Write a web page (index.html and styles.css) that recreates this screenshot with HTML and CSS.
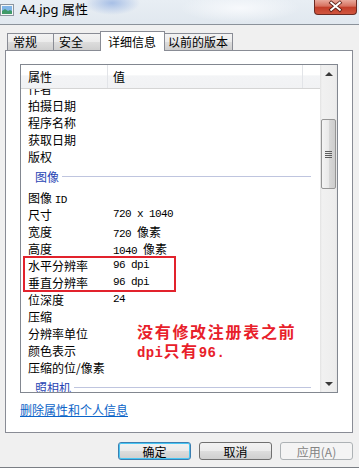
FILE: index.html
```html
<!DOCTYPE html>
<html lang="zh-CN">
<head>
    <meta charset="UTF-8">
    <meta name="viewport" content="width=device-width, initial-scale=1.0">
    <title>A4.jpg 属性</title>
    <link rel="stylesheet" href="styles.css">
</head>
<body>
    <div class="titlebar">
        <svg class="app-icon" width="14" height="12" viewBox="0 0 14 12">
            <rect x="0.5" y="0.5" width="13" height="11" fill="#f4f6f8" stroke="#8d96a0"/>
            <rect x="2" y="2" width="10" height="8" fill="#7fb4e6"/>
            <path d="M2 7 L5 5 L8 7 L10 6 L12 7 L12 10 L2 10 Z" fill="#3f9a6a"/>
        </svg>
        <span class="title">A4.jpg 属性</span>
        <div class="close-btn">
            <svg width="43" height="15" viewBox="0 0 43 15">
                <path d="M17 3.5 L26 11 M26 3.5 L17 11" stroke="#5a1f16" stroke-width="3.8" stroke-linecap="square"/>
                <path d="M17 3.5 L26 11 M26 3.5 L17 11" stroke="#ffffff" stroke-width="2" stroke-linecap="square"/>
            </svg>
        </div>
    </div>

    <div class="tabs">
        <div class="tab tab-first">常规</div>
        <div class="tab">安全</div>
        <div class="tab active">详细信息</div>
        <div class="tab tab-last">以前的版本</div>
    </div>

    <div class="panel">
        <div class="listview">
            <div class="lv-main">
                <div class="lv-header">
                    <div class="hcol hcol-name">属性</div>
                    <div class="hcol hcol-value">值</div>
                    <div class="hcol hcol-rest"></div>
                </div>
                <div class="lv-body">
                    <div class="lv-rows">
                        <div class="row"><span>作者</span><span></span></div>
                        <div class="row"><span>拍摄日期</span><span></span></div>
                        <div class="row"><span>程序名称</span><span></span></div>
                        <div class="row"><span>获取日期</span><span></span></div>
                        <div class="row"><span>版权</span><span></span></div>
                        <div class="group"><span class="group-label">图像</span><span class="group-line"></span></div>
                        <div class="row"><span>图像 <span class="mono">ID</span></span><span></span></div>
                        <div class="row"><span>尺寸</span><span class="mono">720 x 1040</span></div>
                        <div class="row"><span>宽度</span><span><span class="mono">720 </span>像素</span></div>
                        <div class="row"><span>高度</span><span><span class="mono">1040 </span>像素</span></div>
                        <div class="mark">
                            <div class="row"><span>水平分辨率</span><span class="mono">96 dpi</span></div>
                            <div class="row"><span>垂直分辨率</span><span class="mono">96 dpi</span></div>
                        </div>
                        <div class="row"><span>位深度</span><span class="mono">24</span></div>
                        <div class="row"><span>压缩</span><span></span></div>
                        <div class="row"><span>分辨率单位</span><span></span></div>
                        <div class="row"><span>颜色表示</span><span></span></div>
                        <div class="row"><span>压缩的位/像素</span><span></span></div>
                        <div class="group"><span class="group-label">照相机</span><span class="group-line"></span></div>
                    </div>
                </div>
            </div>
            <div class="scrollbar">
                <div class="sb-btn"><span class="arrow-up"></span></div>
                <div class="sb-thumb">
                    <span class="grip"></span>
                    <span class="grip"></span>
                    <span class="grip"></span>
                    <span class="grip"></span>
                </div>
                <div class="sb-btn sb-down"><span class="arrow-down"></span></div>
            </div>

            <!-- note drawn over the screenshot -->
            <div class="note">没有修改注册表之前<br><span class="note-latin">dpi</span>只有<span class="note-latin">96.</span></div>
        </div>
        <a class="link" href="#">删除属性和个人信息</a>
    </div>

    <div class="buttons">
        <button class="btn default">确定</button>
        <button class="btn">取消</button>
        <button class="btn" disabled>应用(A)</button>
    </div>
    <div class="frame-bottom"></div>
</body>
</html>
```

FILE: styles.css
```css
body {
    margin: 0;
    width: 359px;
    height: 468px;
    overflow: hidden;
    background: #f0f0f0;
    font-family: "Noto Sans CJK SC", sans-serif;
    font-size: 12px;
    line-height: 17px;
    color: #000;
}

/* title bar */
.titlebar {
    height: 24px;
    display: flex;
    align-items: flex-start;
    border-bottom: 1px solid #8b929a;
    background:
        radial-gradient(ellipse 28px 12px at 112px 3px, #a7bfe6, rgba(167, 191, 230, 0)),
        radial-gradient(ellipse 60px 14px at 240px 8px, #f7f9fc, rgba(247, 249, 252, 0)),
        linear-gradient(#e8eef4, #e1e8ef);
}
.app-icon {
    margin-top: 4px;
    flex: none;
}
.title {
    margin-left: 6px;
    font-family: "Noto Sans", "Noto Sans CJK SC", sans-serif;
    font-size: 13px;
    line-height: 19px;
}
.close-btn {
    margin-left: auto;
    margin-right: 2px;
    width: 43px;
    height: 15px;
    border: 1px solid #6b2a22;
    border-top: none;
    border-radius: 0 0 4px 4px;
    box-sizing: border-box;
    background: linear-gradient(#e9a99c, #d6705e 45%, #c23d29 50%, #d0563f 100%);
    display: flex;
    justify-content: center;
}
.close-btn svg {
    margin-top: -1px;
}

/* tabs */
.tabs {
    display: flex;
    align-items: flex-start;
    height: 20px;
    margin-top: 6px;
    padding-left: 7px;
}
.tab {
    height: 17px;
    margin-top: 2px;
    margin-left: -1px;
    box-sizing: border-box;
    border: 1px solid #898c95;
    border-bottom: none;
    background: linear-gradient(#f3f3f3, #ebebeb 50%, #dddddd 51%, #cfcfcf);
    line-height: 15px;
    padding-left: 5px;
}
.tab-first {
    margin-left: 0;
    width: 47px;
}
.tab:nth-child(2) {
    width: 48px;
}
.tab.active {
    position: relative;
    z-index: 1;
    width: 65px;
    height: 20px;
    margin-top: 0;
    background: #fff;
    padding-left: 7px;
    line-height: 19px;
}
.tab-last {
    width: 69px;
    padding-left: 3px;
}

/* panel */
.panel {
    margin: -1px 6px 0 5px;
    height: 383px;
    box-sizing: border-box;
    border: 1px solid #898c95;
    background: #fff;
    overflow: hidden;
}
.listview {
    position: relative;
    margin: 13px 14px 0 14px;
    height: 329px;
    box-sizing: border-box;
    border: 1px solid #828790;
    display: flex;
}
.lv-main {
    flex: 1;
    min-width: 0;
    display: flex;
    flex-direction: column;
}
.lv-header {
    height: 23px;
    flex: none;
    display: flex;
    border-bottom: 1px solid #d5d5d5;
    background: linear-gradient(#ffffff, #ffffff 45%, #f3f4f6 46%, #f1f2f4);
}
.hcol {
    padding: 3px 0 0 7px;
    line-height: 18px;
    box-sizing: border-box;
}
.hcol-name {
    width: 87px;
    border-right: 1px solid #e2e4e8;
}
.hcol-value {
    width: 195px;
    padding-left: 5px;
    border-right: 1px solid #e2e4e8;
}
.lv-body {
    flex: 1;
    overflow: hidden;
}
.lv-rows {
    margin-top: -9px;
}
.row {
    display: grid;
    grid-template-columns: 85px 1fr;
    padding-left: 7px;
    height: 17px;
    line-height: 17px;
    white-space: nowrap;
}
.mono {
    font-family: "Liberation Mono", monospace;
    font-size: 11px;
    letter-spacing: -0.6px;
}
.group {
    height: 25px;
    display: flex;
    align-items: center;
    padding: 0 9px 0 14px;
    margin-top: -1px;
}
.group-label {
    color: #2a46b4;
    line-height: 17px;
}
.group-line {
    flex: 1;
    margin-left: 3px;
    border-top: 1px solid #bfc5df;
}
.mark {
    margin-left: 3px;
    width: 151px;
    outline: 2px solid #e2222c;
    outline-offset: -1px;
}
.mark .row {
    padding-left: 4px;
}

/* scrollbar */
.scrollbar {
    width: 17px;
    flex: none;
    display: flex;
    flex-direction: column;
    align-items: center;
    background: linear-gradient(90deg, #e2e2e2, #f1f1f1 2px, #ededed 15px, #e6e6e6);
}
.sb-btn {
    width: 17px;
    height: 17px;
    display: flex;
    align-items: center;
    justify-content: center;
}
.sb-down {
    margin-top: auto;
}
.arrow-up {
    border-left: 4px solid transparent;
    border-right: 4px solid transparent;
    border-bottom: 4px solid #3a3a3a;
}
.arrow-down {
    border-left: 4px solid transparent;
    border-right: 4px solid transparent;
    border-top: 4px solid #3a3a3a;
}
.sb-thumb {
    margin-top: 37px;
    width: 15px;
    height: 70px;
    box-sizing: border-box;
    border: 1px solid #959595;
    border-radius: 2px;
    background: linear-gradient(90deg, #f4f4f4, #e9e9e9 50%, #d9d9d9 51%, #cdcdcd);
    display: flex;
    flex-direction: column;
    align-items: center;
    justify-content: center;
    gap: 1px;
}
.grip {
    width: 7px;
    height: 1px;
    background: #5e5e5e;
}

/* red note */
.note {
    position: absolute;
    left: 116px;
    top: 257px;
    color: #e8202a;
    font-size: 16px;
    font-weight: 700;
    line-height: 19px;
    letter-spacing: 1.7px;
    white-space: nowrap;
}
.note-latin {
    font-family: "Liberation Mono", monospace;
    font-size: 14px;
    letter-spacing: 0.4px;
}

.link {
    display: inline-block;
    margin: 9px 0 0 14px;
    color: #0b64c8;
    line-height: 16px;
    text-decoration: underline;
}

/* buttons */
.buttons {
    display: flex;
    justify-content: flex-end;
    gap: 8px;
    margin: 9px 6px 0 0;
}
.btn {
    width: 73px;
    height: 18px;
    padding: 0;
    box-sizing: border-box;
    border: 1px solid #707070;
    border-radius: 3px;
    background: linear-gradient(#f2f2f2, #ebebeb 50%, #dddddd 51%, #cfcfcf);
    font-family: "Noto Sans CJK SC", sans-serif;
    font-size: 12px;
    line-height: 15px;
    color: #000;
}
.btn.default {
    border-color: #3c7fb1;
    box-shadow: inset 0 0 0 1px #48c6f4;
}
.btn:disabled {
    border-color: #adb2b5;
    background: #f4f4f4;
    color: #838383;
}
.frame-bottom {
    margin-top: 7px;
    border-top: 1px solid #7a7e84;
}
```
